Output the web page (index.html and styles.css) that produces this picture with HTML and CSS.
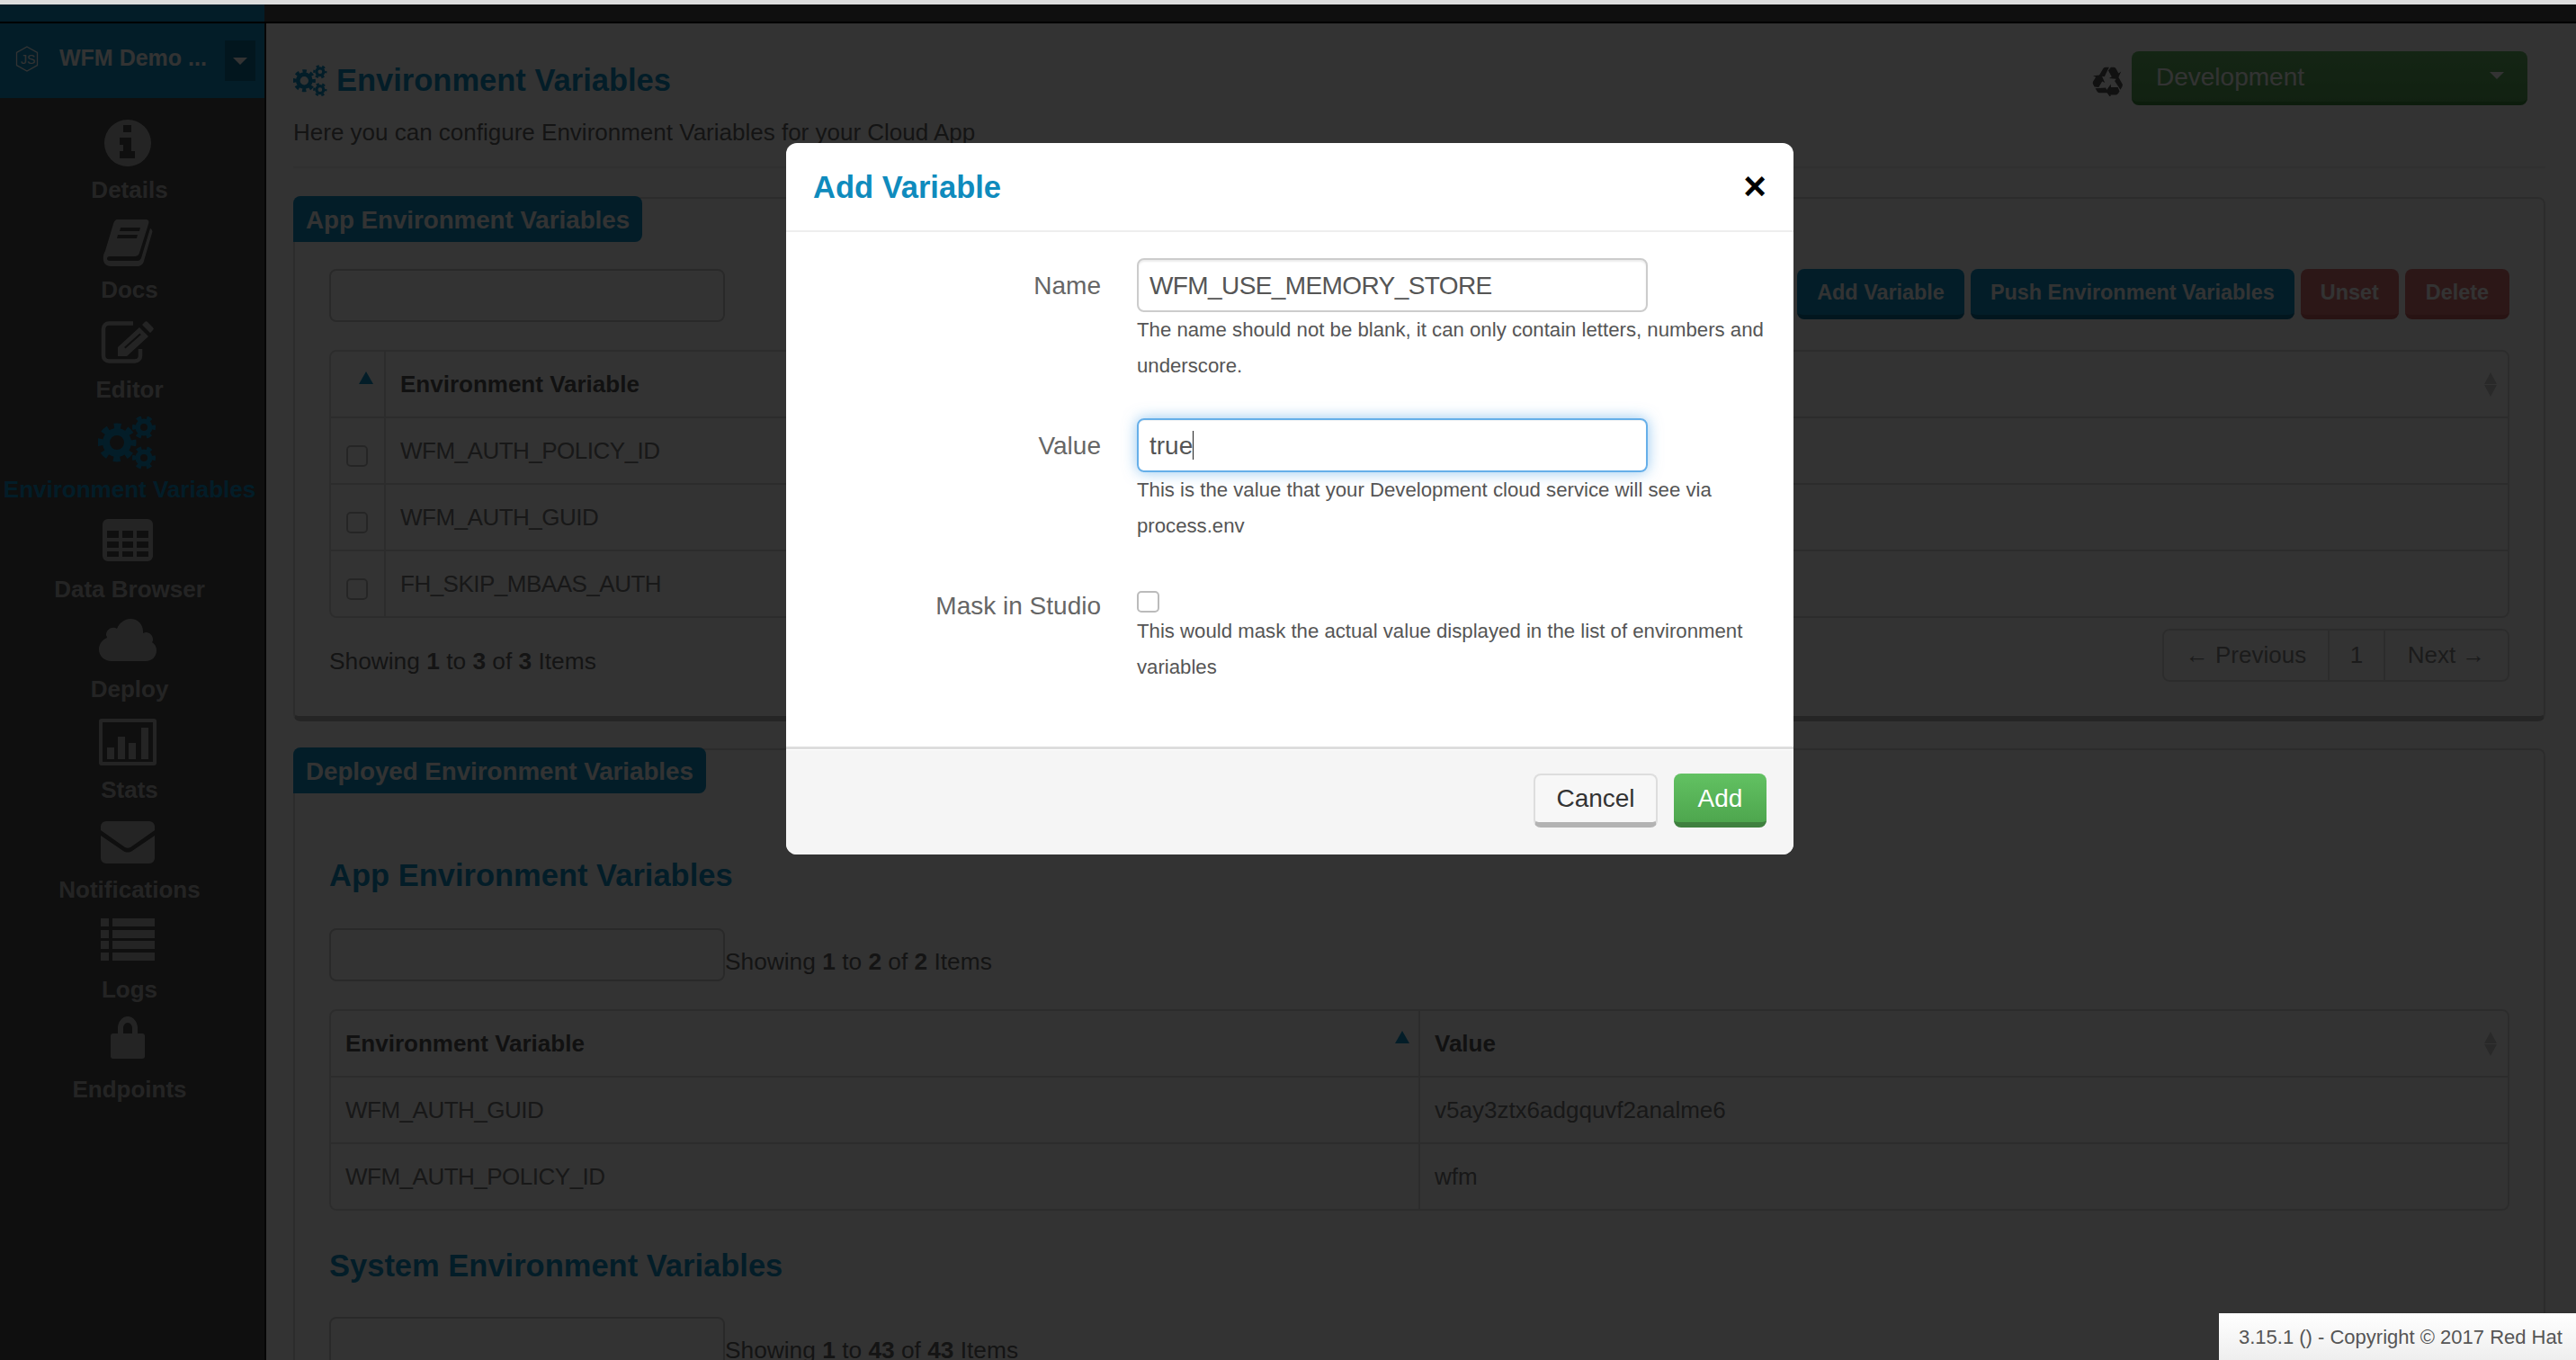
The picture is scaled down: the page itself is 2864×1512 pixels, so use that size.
FILE: index.html
```html
<!DOCTYPE html>
<html lang="en">
<head>
  <meta charset="UTF-8" />
  <title>Environment Variables</title>
  <link rel="stylesheet" href="styles.css">
</head>
<body>
  <svg class="defs" width="0" height="0">
    <symbol id="cogs" viewBox="0 0 65 59">
      <g fill="none" stroke="currentColor">
        <circle cx="21" cy="29" r="12" stroke-width="8"/>
        <circle cx="21" cy="29" r="18" stroke-width="7" stroke-dasharray="7.5 6.64" stroke-dashoffset="3.75"/>
        <circle cx="51" cy="12" r="6.75" stroke-width="5.500"/>
        <circle cx="51" cy="12" r="11" stroke-width="4" stroke-dasharray="5.500 6" stroke-dashoffset="2.75"/>
        <circle cx="51" cy="46" r="6.75" stroke-width="5.500"/>
        <circle cx="51" cy="46" r="11" stroke-width="4" stroke-dasharray="5.500 6" stroke-dashoffset="2.75"/>
      </g>
    </symbol>
  </svg>

  <div class="browser-edge"></div>
  <div class="topbar"><div class="topbar-side"></div></div>

  <div class="layout">
    <aside class="sidebar">
      <div class="app-head">
        <svg class="app-logo" viewBox="0 0 26 30" width="26" height="30">
          <path d="M13 1l11.500 6.500v14L13 28 1.500 21.500v-14z" fill="none" stroke="currentColor" stroke-width="1.300"/>
          <text x="6" y="20" font-size="14">JS</text>
        </svg>
        <span class="app-name">WFM Demo ...</span>
        <span class="app-caret"></span>
      </div>
      <nav class="nav">
        <a class="nav-item">
          <span class="nav-icon"><svg viewBox="0 0 52 52" width="52" height="52"><path fill="currentColor" fill-rule="evenodd" d="M26 0a26 26 0 1 0 0 52a26 26 0 0 0 0-52zM21 6h9v8h-9zM17 20h13v15h4v8H17v-8h4v-7h-4z"/></svg></span>
          <span>Details</span>
        </a>
        <a class="nav-item">
          <span class="nav-icon"><svg viewBox="0 0 56 52" width="56" height="52"><path fill="currentColor" fill-rule="evenodd" d="M17 0h31c3 0 4 2 3 5L41 37c-1 3-3 4-6 4H8c-4 0-4 5 0 5h31c2 0 3-1 4-3L53 10c2 1 3 3 2 5L46 46c-1 4-4 6-8 6H9c-6 0-9-5-8-11 0-2 1-4 2-6L12 5c1-3 2-5 5-5zM20 9l-1 4h22l1-4zM17 17l-1 4h22l1-4z"/></svg></span>
          <span>Docs</span>
        </a>
        <a class="nav-item">
          <span class="nav-icon up-1"><svg viewBox="0 0 60 48" width="60" height="48"><path fill="none" stroke="currentColor" stroke-width="4.500" d="M36 3.500H9a6 6 0 0 0-6 6v30a6 6 0 0 0 6 6h29a6 6 0 0 0 6-6V32"/><path fill="currentColor" fill-rule="evenodd" d="M43 8l10 10-24 22H19V30zM26 30l1.500 1.500L45 16l-1.500-1.500zM46 5l3-3a2 2 0 0 1 3 0l6 6a2 2 0 0 1 0 3l-3 3z"/></svg></span>
          <span>Editor</span>
        </a>
        <a class="nav-item active">
          <span class="nav-icon"><svg width="65" height="59"><use href="#cogs"/></svg></span>
          <span>Environment Variables</span>
        </a>
        <a class="nav-item">
          <span class="nav-icon up-3"><svg viewBox="0 0 56 47" width="56" height="47"><path fill="currentColor" fill-rule="evenodd" d="M6 0h44a6 6 0 0 1 6 6v35a6 6 0 0 1-6 6H6a6 6 0 0 1-6-6V6a6 6 0 0 1 6-6zM5 13v8h13v-8zM22 13v8h12v-8zM38 13v8h13v-8zM5 25v7h13v-7zM22 25v7h12v-7zM38 25v7h13v-7zM5 36v6h13v-6zM22 36v6h12v-6zM38 36v6h13v-6z"/></svg></span>
          <span>Data Browser</span>
        </a>
        <a class="nav-item">
          <span class="nav-icon up-3"><svg viewBox="0 0 64 47" width="64" height="47"><path fill="currentColor" d="M14 47C6 47 0 41 0 34c0-6 4-11 9-13 0-2-1-2-1-3 0-7 8-10 12-7C23 4 29 0 35 0c8 0 14 6 14 14v2c1 0 2-1 3-1 5 0 8 4 8 8 0 1 0 2-1 3 3 2 5 5 5 9 0 7-5 12-12 12z"/></svg></span>
          <span>Deploy</span>
        </a>
        <a class="nav-item">
          <span class="nav-icon up-1"><svg viewBox="0 0 64 52" width="64" height="52"><path fill="currentColor" fill-rule="evenodd" d="M3 0h58a3 3 0 0 1 3 3v46a3 3 0 0 1-3 3H3a3 3 0 0 1-3-3V3a3 3 0 0 1 3-3zM4 4v44h56V4zM9 32h8v13H9zM21 20h8v25h-8zM33 27h8v18h-8zM47 10h8v35h-8z"/></svg></span>
          <span>Stats</span>
        </a>
        <a class="nav-item">
          <span class="nav-icon"><svg viewBox="0 0 60 47" width="60" height="47"><path fill="currentColor" d="M6 0h48a6 6 0 0 1 6 6v4L33 29c-2 1-4 1-6 0L0 10V6a6 6 0 0 1 6-6zM0 16l25 17c3 2 7 2 10 0l25-17v25a6 6 0 0 1-6 6H6a6 6 0 0 1-6-6z"/></svg></span>
          <span>Notifications</span>
        </a>
        <a class="nav-item">
          <span class="nav-icon up-3"><svg viewBox="0 0 60 47" width="60" height="47"><path fill="currentColor" d="M0 0h9v9H0zM13 0h47v9H13zM0 13h9v9H0zM13 13h47v9H13zM0 25h9v9H0zM13 25h47v9H13zM0 38h9v9H0zM13 38h47v9H13z"/></svg></span>
          <span>Logs</span>
        </a>
        <a class="nav-item">
          <span class="nav-icon up-5"><svg viewBox="0 0 38 47" width="38" height="47"><path fill="currentColor" fill-rule="evenodd" d="M8 19v-6C8 6 13 0 19 0s11 6 11 13v6h5a3 3 0 0 1 3 3v22a3 3 0 0 1-3 3H3a3 3 0 0 1-3-3V22a3 3 0 0 1 3-3zM14 19h10v-6c0-3-2-6-5-6s-5 3-5 6z"/></svg></span>
          <span>Endpoints</span>
        </a>
      </nav>
    </aside>

    <main class="content">
      <header class="page-head">
        <div class="page-title-row">
          <h1><svg width="38" height="36"><use href="#cogs"/></svg>Environment Variables</h1>
          <div class="env-picker">
            <svg class="recycle" viewBox="-2 -2 38 38" width="36" height="36">
              <g id="recycle-arm" fill="currentColor">
                <path d="M6 12L11 3.500Q12 2 14 2h4L12.500 13z"/>
                <path d="M20 2h3q2 0 3 1.500L29 9l3-2-4 9-10-1 3-2-4-7z"/>
              </g>
              <use href="#recycle-arm" transform="rotate(120 17 19)"/>
              <use href="#recycle-arm" transform="rotate(240 17 19)"/>
            </svg>
            <div class="env-select">Development<span class="caret"></span></div>
          </div>
        </div>
        <p class="subtitle">Here you can configure Environment Variables for your Cloud App</p>
      </header>

      <section class="panel">
        <div class="panel-tab">App Environment Variables</div>
        <div class="panel-body">
          <div class="toolbar">
            <div class="search"></div>
            <div class="actions">
              <button class="btn btn-primary">Add Variable</button>
              <button class="btn btn-primary">Push Environment Variables</button>
              <button class="btn btn-danger">Unset</button>
              <button class="btn btn-danger">Delete</button>
            </div>
          </div>
          <div class="table-wrap">
            <table>
              <colgroup><col class="col-check"><col class="col-name"><col></colgroup>
              <tr>
                <th class="check-cell"><span class="sort-up"></span></th>
                <th>Environment Variable</th>
                <th class="sortable"><span class="sort-both"></span></th>
              </tr>
              <tr><td class="check-cell"><input type="checkbox" class="row-check"></td><td class="var-name">WFM_AUTH_POLICY_ID</td><td></td></tr>
              <tr><td class="check-cell"><input type="checkbox" class="row-check"></td><td class="var-name">WFM_AUTH_GUID</td><td></td></tr>
              <tr><td class="check-cell"><input type="checkbox" class="row-check"></td><td class="var-name">FH_SKIP_MBAAS_AUTH</td><td></td></tr>
            </table>
          </div>
          <div class="table-foot">
            <div class="showing">Showing <b>1</b> to <b>3</b> of <b>3</b> Items</div>
            <div class="pager">
              <span class="pager-prev">← Previous</span>
              <span class="pager-num">1</span>
              <span class="pager-next">Next →</span>
            </div>
          </div>
        </div>
      </section>

      <section class="panel panel-deployed">
        <div class="panel-tab">Deployed Environment Variables</div>
        <div class="panel-body">
          <h3>App Environment Variables</h3>
          <div class="search-row">
            <div class="search"></div>
            <div class="showing-inline">Showing <b>1</b> to <b>2</b> of <b>2</b> Items</div>
          </div>
          <div class="table-wrap">
            <table>
              <colgroup><col class="col-half"><col></colgroup>
              <tr>
                <th class="sortable">Environment Variable<span class="sort-up"></span></th>
                <th class="sortable">Value<span class="sort-both"></span></th>
              </tr>
              <tr><td class="var-name">WFM_AUTH_GUID</td><td>v5ay3ztx6adgquvf2analme6</td></tr>
              <tr><td class="var-name">WFM_AUTH_POLICY_ID</td><td>wfm</td></tr>
            </table>
          </div>
          <h3 class="second">System Environment Variables</h3>
          <div class="search-row">
            <div class="search"></div>
            <div class="showing-inline">Showing <b>1</b> to <b>43</b> of <b>43</b> Items</div>
          </div>
        </div>
      </section>
    </main>
  </div>

  <div class="backdrop"></div>

  <div class="modal">
    <div class="modal-head">
      <h2>Add Variable</h2>
      <span class="modal-close">×</span>
    </div>
    <div class="modal-body">
      <div class="form-row">
        <label>Name</label>
        <div>
          <div class="field field-name">WFM_USE_MEMORY_STORE</div>
          <p class="help">The name should not be blank, it can only contain letters, numbers and underscore.</p>
        </div>
      </div>
      <div class="form-row">
        <label>Value</label>
        <div>
          <div class="field focused">true<span class="text-caret"></span></div>
          <p class="help">This is the value that your Development cloud service will see via process.env</p>
        </div>
      </div>
      <div class="form-row">
        <label>Mask in Studio</label>
        <div>
          <input type="checkbox" class="mask-check">
          <p class="help">This would mask the actual value displayed in the list of environment variables</p>
        </div>
      </div>
    </div>
    <div class="modal-foot">
      <button class="btn-cancel">Cancel</button>
      <button class="btn-add">Add</button>
    </div>
  </div>

  <div class="version">3.15.1 () - Copyright © 2017 Red Hat</div>
</body>
</html>
```

FILE: styles.css
```css
* {
  box-sizing: border-box;
  margin: 0;
  padding: 0;
}

html, body {
  height: 100%;
}

body {
  font-family: "Liberation Sans", Arial, sans-serif;
  font-size: 26px;
  color: #666;
  background: #fff;
  overflow: hidden;
  display: flex;
  flex-direction: column;
}

.defs {
  position: absolute;
}

.browser-edge {
  height: 5px;
  background: #ddd;
  position: relative;
  z-index: 20;
}

.topbar {
  height: 21px;
  background: #4a4a4a;
  border-bottom: 2px solid #000;
  flex-shrink: 0;
}

.topbar-side {
  width: 294px;
  height: 100%;
  background: #0f92c8;
}

.layout {
  flex: 1;
  display: flex;
  min-height: 0;
}

/* sidebar */
.sidebar {
  width: 296px;
  flex-shrink: 0;
  background: #4a4a4a;
  border-right: 2px solid #222;
}

.app-head {
  height: 83px;
  background: #0f92c8;
  color: #fff;
  display: flex;
  align-items: center;
  padding: 0 10px 0 17px;
}

.app-logo {
  margin-bottom: 4px;
}

.app-logo text {
  fill: currentColor;
  font-family: "Liberation Sans", sans-serif;
}

.app-name {
  font-size: 25px;
  font-weight: bold;
  margin: 0 0 6px 23px;
  white-space: nowrap;
  width: 184px;
}

.app-caret {
  width: 34px;
  height: 45px;
  background: #0a6d96;
  display: flex;
  align-items: center;
  justify-content: center;
}

.app-caret::after {
  content: "";
  border: 8px solid transparent;
  border-top: 8px solid #fff;
  border-bottom: 0;
}

.nav {
  padding-top: 17px;
  display: grid;
  grid-auto-rows: 111.100px;
}

.nav-item {
  display: flex;
  flex-direction: column;
  align-items: center;
  color: #b6b6b6;
  font-size: 26px;
  font-weight: bold;
  line-height: 38px;
  white-space: nowrap;
  padding-right: 6px;
}

.nav-item.active {
  color: #0f92c8;
}

.nav-icon {
  height: 66px;
  display: flex;
  align-items: center;
  margin-left: -5px;
}

.up-1 svg {
  margin-bottom: 2px;
}

.up-3 svg {
  margin-bottom: 6px;
}

.up-5 svg {
  margin-bottom: 10px;
}

/* main */
.content {
  flex: 1;
  min-width: 0;
  padding: 0 34px 0 30px;
  background: #fff;
}

.page-head {
  padding-top: 31px;
  height: 161px;
  border-bottom: 2px solid #eee;
}

.page-title-row {
  display: flex;
  justify-content: space-between;
  align-items: center;
  height: 60px;
}

h1 {
  font-size: 34.500px;
  color: #0f92c8;
  display: flex;
  align-items: center;
  gap: 10px;
  padding-top: 5px;
}

.env-picker {
  display: flex;
  align-items: center;
  gap: 8px;
  margin-right: 20px;
}

.recycle {
  margin-top: 4px;
  color: #555;
}

.env-select {
  width: 440px;
  height: 60px;
  line-height: 58px;
  font-size: 28px;
  padding-left: 27px;
  border-radius: 8px;
  border-bottom: 4px solid #3d8b3d;
  background: linear-gradient(#66b866, #58a658);
  color: #fff;
  position: relative;
}

.caret {
  position: absolute;
  right: 26px;
  top: 23px;
  border: 8px solid transparent;
  border-top: 8px solid #fff;
  border-bottom: 0;
}

.subtitle {
  line-height: 40px;
  margin-top: 10px;
}

.panel {
  margin-top: 32px;
  height: 583px;
  border: 2px solid #ddd;
  border-bottom: 6px solid #bbb;
  border-radius: 8px;
}

.panel-deployed {
  margin-top: 30px;
  height: 800px;
  border-bottom: 0;
}

.panel-tab {
  display: inline-block;
  margin: -3px 0 0 -2px;
  height: 51px;
  line-height: 53px;
  padding: 0 14px;
  background: #0f92c8;
  color: #fff;
  font-size: 27.700px;
  font-weight: bold;
  border-radius: 8px 8px 8px 0;
  vertical-align: top;
}

.panel-body {
  padding: 0 38px;
}

.toolbar {
  display: flex;
  justify-content: space-between;
  margin-top: 30px;
  height: 59px;
}

.search {
  width: 440px;
  height: 59px;
  border: 2px solid #ccc;
  border-radius: 8px;
  background: #fff;
  flex-shrink: 0;
}

.actions {
  display: flex;
  gap: 7px;
  height: 56px;
}

.btn {
  font: bold 23.400px "Liberation Sans", Arial, sans-serif;
  color: #fff;
  padding: 2px 22px 0;
  border: 0;
  border-radius: 8px;
}

.btn-primary {
  background: #0f92c8;
  border-bottom: 5px solid #0a6d96;
}

.btn-danger {
  background: #dc7676;
  border-bottom: 5px solid #c96060;
}

.btn-danger:last-child {
  padding: 2px 23px 0;
}

.table-wrap {
  margin-top: 31px;
  border: 2px solid #ddd;
  border-radius: 8px;
}

table {
  width: 100%;
  border-collapse: separate;
  border-spacing: 0;
  table-layout: fixed;
}

.col-check {
  width: 59px;
}

.col-name {
  width: 1000px;
}

.col-half {
  width: 1209px;
}

th, td {
  height: 74px;
  padding: 0 16px;
  text-align: left;
  color: #777;
  font-size: 26px;
  font-weight: normal;
  border-top: 2px solid #ddd;
  white-space: nowrap;
  position: relative;
}

th {
  height: 72px;
  font-weight: bold;
  color: #555;
  border-top: 0;
}

td:nth-child(2), th:nth-child(2) {
  border-left: 2px solid #ddd;
}

.var-name {
  letter-spacing: -0.500px;
}

.sort-up {
  position: absolute;
  right: 10px;
  top: 22px;
  border: 8px solid transparent;
  border-bottom: 14px solid #0f92c8;
  border-top: 0;
}

.check-cell .sort-up {
  right: 12px;
}

.sort-both {
  position: absolute;
  right: 12px;
  top: 23px;
  border: 7px solid transparent;
  border-bottom: 13px solid #ccc;
  border-top: 0;
}

.sort-both::after {
  content: "";
  position: absolute;
  left: -7px;
  top: 14px;
  border: 7px solid transparent;
  border-top: 13px solid #ccc;
  border-bottom: 0;
}

.row-check {
  appearance: none;
  display: block;
  width: 24px;
  height: 24px;
  border: 2px solid #bbb;
  border-radius: 5px;
  background: #fff;
  margin: 12px 0 0 1px;
}

.table-foot {
  display: flex;
  justify-content: space-between;
  margin-top: 12px;
}

.showing {
  font-size: 26.300px;
  padding-top: 14px;
  line-height: 44px;
}

.pager {
  display: flex;
  height: 59px;
  width: 386px;
  border: 2px solid #ddd;
  border-radius: 8px;
  line-height: 55px;
  color: #888;
  text-align: center;
}

.pager-prev {
  width: 182px;
}

.pager-num {
  width: 64px;
  border-left: 2px solid #ddd;
  border-right: 2px solid #ddd;
}

.pager-next {
  flex: 1;
}

h3 {
  font-size: 34.500px;
  color: #0f92c8;
  line-height: 44px;
  margin-top: 69px;
}

h3.second {
  margin-top: 39px;
}

.search-row {
  display: flex;
  align-items: flex-end;
  margin-top: 37px;
  height: 59px;
}

h3.second + .search-row {
  margin-top: 35px;
}

.showing-inline {
  font-size: 26.300px;
  line-height: 44px;
}

/* overlay */
.backdrop {
  position: fixed;
  inset: 5px 0 0 0;
  background: rgba(0, 0, 0, 0.8);
  z-index: 10;
}

.modal {
  position: fixed;
  left: 874px;
  top: 159px;
  width: 1120px;
  height: 791px;
  background: #fff;
  border-radius: 12px;
  z-index: 11;
  display: flex;
  flex-direction: column;
}

.modal-head {
  height: 99px;
  border-bottom: 2px solid #eee;
  padding: 0 30px;
  display: flex;
  justify-content: space-between;
  align-items: center;
}

.modal-head h2 {
  font-size: 34.500px;
  color: #0f8bbd;
  padding-top: 2px;
}

.modal-close {
  font-size: 44px;
  font-weight: bold;
  color: #000;
  line-height: 1;
  margin: -2px 0 0;
}

.modal-body {
  flex: 1;
  padding: 29px 30px 0 0;
}

.form-row {
  display: grid;
  grid-template-columns: 350px 1fr;
  column-gap: 40px;
  margin-bottom: 38px;
  font-size: 28px;
}

.form-row label {
  text-align: right;
  line-height: 62px;
}

.field {
  width: 568px;
  height: 60px;
  border: 2px solid #ccc;
  border-radius: 8px;
  box-shadow: inset 0 2px 2px rgba(0, 0, 0, 0.08);
  padding: 0 12px;
  line-height: 58px;
  color: #555;
}

.field-name {
  letter-spacing: -0.600px;
}

.field.focused {
  border-color: #66afe9;
  box-shadow: inset 0 1px 1px rgba(0, 0, 0, 0.05), 0 0 16px rgba(102, 175, 233, 0.7);
}

.text-caret {
  display: inline-block;
  width: 1px;
  height: 32px;
  background: #222;
  vertical-align: -6px;
}

.help {
  font-size: 22.200px;
  line-height: 40px;
  color: #555;
}

.mask-check {
  appearance: none;
  display: block;
  width: 25px;
  height: 24px;
  margin: 14px 0 1px;
  border: 2px solid #bbb;
  border-radius: 5px;
  background: #fff;
}

.modal-foot {
  height: 120px;
  flex-shrink: 0;
  border-top: 3px solid #ddd;
  box-shadow: inset 0 1px 0 #fff;
  background: #f5f5f5;
  border-radius: 0 0 12px 12px;
  padding: 27px 30px 0 0;
  display: flex;
  justify-content: flex-end;
  gap: 18px;
}

.btn-cancel, .btn-add {
  font: 28px "Liberation Sans", Arial, sans-serif;
  height: 60px;
  border-radius: 8px;
}

.btn-cancel {
  width: 138px;
  color: #333;
  background: #f7f7f7;
  border: 2px solid #ddd;
  border-bottom: 6px solid #b3b3b3;
}

.btn-add {
  width: 103px;
  padding-top: 2px;
  color: #fff;
  background: linear-gradient(#62c162, #4ea64e);
  border: 0;
  border-bottom: 6px solid #3f803f;
}

.version {
  position: fixed;
  right: 0;
  bottom: 0;
  width: 397px;
  height: 52px;
  padding-left: 22px;
  line-height: 54px;
  font-size: 22px;
  color: #555;
  background: linear-gradient(#fff, #eee);
  z-index: 12;
  white-space: nowrap;
}
```
